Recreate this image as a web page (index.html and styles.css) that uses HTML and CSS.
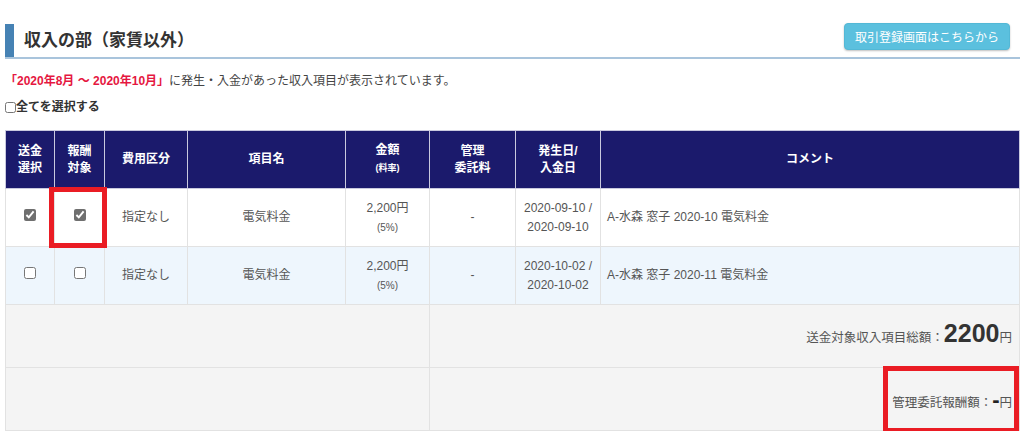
FILE: index.html
```html
<!DOCTYPE html>
<html lang="ja">
<head>
    <meta charset="UTF-8">
    <meta name="viewport" content="width=device-width, initial-scale=1.0">
    <title>収入の部（家賃以外）</title>
    <link rel="stylesheet" href="styles.css">
</head>
<body>
    <div class="page">
        <div class="section-head">
            <h2>収入の部（家賃以外）</h2>
            <button class="btn-info">取引登録画面はこちらから</button>
        </div>

        <p class="period"><span class="period-range">「2020年8月 ～ 2020年10月」</span>に発生・入金があった収入項目が表示されています。</p>

        <label class="select-all"><input type="checkbox">全てを選択する</label>

        <table class="income-table">
            <colgroup>
                <col style="width: 49px">
                <col style="width: 50px">
                <col style="width: 83px">
                <col style="width: 158px">
                <col style="width: 84px">
                <col style="width: 86px">
                <col style="width: 85px">
                <col>
            </colgroup>
            <thead>
                <tr>
                    <th>送金<br>選択</th>
                    <th>報酬<br>対象</th>
                    <th>費用区分</th>
                    <th>項目名</th>
                    <th>金額<br><small>(料率)</small></th>
                    <th>管理<br>委託料</th>
                    <th>発生日/<br>入金日</th>
                    <th>コメント</th>
                </tr>
            </thead>
            <tbody>
                <tr>
                    <td><input type="checkbox" class="locked" checked></td>
                    <td><input type="checkbox" class="locked" checked></td>
                    <td>指定なし</td>
                    <td>電気料金</td>
                    <td>2,200円<br><small>(5%)</small></td>
                    <td>-</td>
                    <td>2020-09-10 /<br>2020-09-10</td>
                    <td class="comment">A-水森 窓子 2020-10 電気料金</td>
                </tr>
                <tr class="alt">
                    <td><input type="checkbox"></td>
                    <td><input type="checkbox"></td>
                    <td>指定なし</td>
                    <td>電気料金</td>
                    <td>2,200円<br><small>(5%)</small></td>
                    <td>-</td>
                    <td>2020-10-02 /<br>2020-10-02</td>
                    <td class="comment">A-水森 窓子 2020-11 電気料金</td>
                </tr>
                <tr class="total">
                    <td colspan="5"></td>
                    <td colspan="3" class="sum">送金対象収入項目総額：<span class="big">2200</span>円</td>
                </tr>
                <tr class="total">
                    <td colspan="5"></td>
                    <td colspan="3" class="sum fee">管理委託報酬額：<span class="dash">-</span>円</td>
                </tr>
            </tbody>
        </table>

        <div class="mark mark-check"></div>
        <div class="mark mark-fee"></div>
    </div>
</body>
</html>
```

FILE: styles.css
```css
body {
    margin: 0;
    font-family: "Liberation Sans", "Noto Sans CJK JP", sans-serif;
    font-size: 12px;
    color: #555;
    background: white;
}
.page {
    position: relative;
    padding: 23px 4px 0 5px;
}
.section-head {
    display: flex;
    justify-content: space-between;
    align-items: flex-start;
    border-bottom: 2px solid #a9c4dc;
}
h2 {
    margin: 1px 0 0 0;
    height: 33px;
    line-height: 33px;
    border-left: 9px solid #4682b4;
    padding-left: 10px;
    font-size: 17px;
    color: #333;
}
.btn-info {
    margin-right: 10px;
    width: 166px;
    height: 27px;
    padding: 0;
    background-color: #5bc0de;
    border: 1px solid #53b8d6;
    border-radius: 4px;
    box-shadow: 0 1px 2px rgba(0, 0, 0, 0.25);
    color: white;
    font-family: "Liberation Sans", "Noto Sans CJK JP", sans-serif;
    font-size: 12px;
}
.period {
    margin: 13px 0 0 0;
    line-height: 18px;
    color: #444;
}
.period-range {
    color: #e5173f;
    font-weight: bold;
}
.select-all {
    display: flex;
    align-items: center;
    margin-top: 8px;
    line-height: 18px;
    font-weight: bold;
    color: #333;
}
.select-all input {
    margin: 0;
    width: 11px;
    height: 11px;
}
.income-table {
    width: 100%;
    margin-top: 14px;
    border-collapse: collapse;
    table-layout: fixed;
}
.income-table th {
    height: 57px;
    padding: 0;
    background-color: #1b1a6c;
    border: 1px solid #c9c9de;
    color: white;
    font-size: 12px;
    line-height: 17px;
}
.income-table th small {
    font-size: 9px;
}
.income-table td {
    height: 57px;
    padding: 0;
    border: 1px solid #e2e2e2;
    text-align: center;
    line-height: 19px;
}
.income-table td small {
    font-size: 10px;
}
.income-table td input {
    margin: 0;
    width: 12px;
    height: 12px;
}
.income-table td input.locked {
    accent-color: #6f6f6f;
    pointer-events: none;
}
.income-table tr.alt td {
    background-color: #eef6fd;
}
.income-table td.comment {
    text-align: left;
    padding-left: 6px;
}
.income-table tr.total td {
    height: 62px;
    background-color: #f4f4f4;
}
.income-table td.sum {
    text-align: right;
    padding-right: 7px;
    font-size: 12.5px;
    color: #555;
}
.big {
    font-size: 25px;
    font-weight: bold;
    color: #333;
}
.income-table tr.total td.fee {
    height: 36px;
    vertical-align: top;
    padding-top: 26px;
}
.dash {
    font-size: 22px;
    font-weight: bold;
    line-height: 10px;
    color: #222;
}
.mark {
    position: absolute;
    border: 5px solid #ea1c24;
}
.mark-check {
    left: 49px;
    top: 187px;
    width: 48px;
    height: 51px;
}
.mark-fee {
    left: 883px;
    top: 366px;
    width: 126px;
    height: 57px;
}
```
